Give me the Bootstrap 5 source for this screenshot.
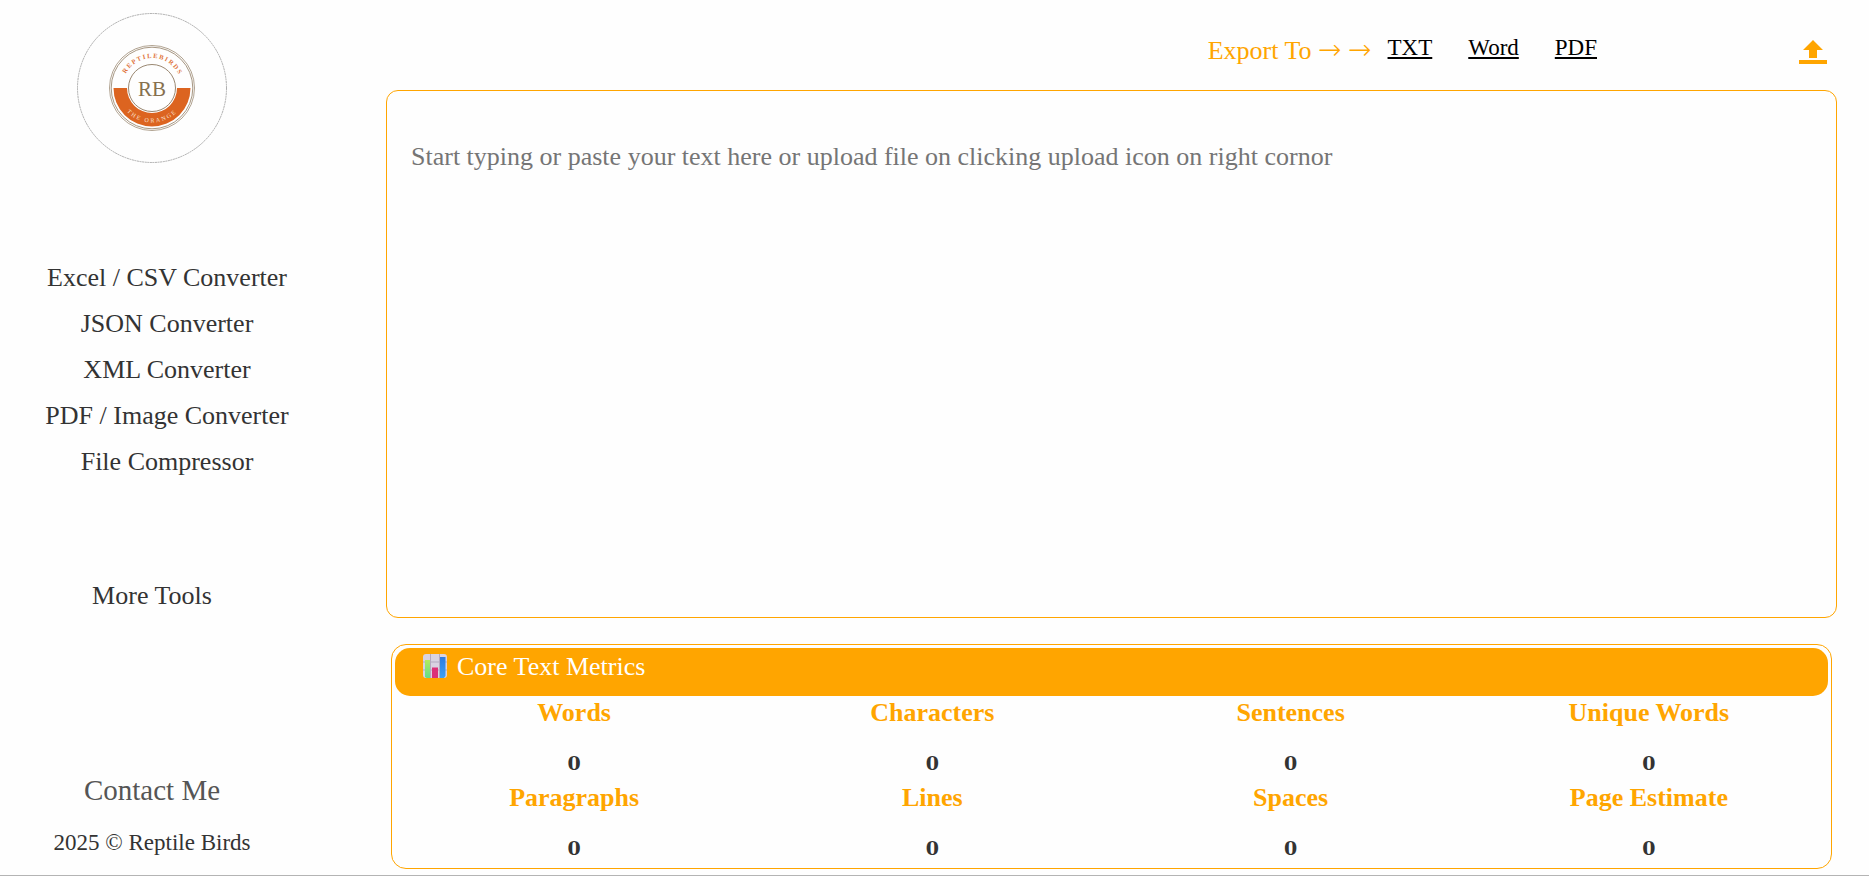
<!DOCTYPE html>
<html lang="en">
<head>
<meta charset="utf-8">
<meta name="viewport" content="width=device-width, initial-scale=1">
<title>Reptile Birds - Text Metrics</title>
<link rel="stylesheet" href="https://cdn.jsdelivr.net/npm/bootstrap@5.3.0/dist/css/bootstrap.min.css">
<style>
  :root { --brand: #ffa500; --ink: #333; }
  body { font-family: Georgia, "Liberation Serif", serif; font-size: 26px; line-height: 36px; color: var(--ink); background: #fefefe; }
  .app-shell { border-bottom: 1px solid #b4b4b4; }
  .side-panel { width: 304px; padding: 13px 0 14px; }
  .side-panel a { color: var(--ink); line-height: 46px; }
  .logo-ring { width: 150px; height: 150px; margin-bottom: 92px; }
  .tool-list { padding-left: 30px; margin-bottom: 88px; }
  .side-panel .contact-link { color: #555; font-size: 29px; line-height: 46px; margin-bottom: 12px; }
  .copyright { font-size: 23px; }
  .workspace { padding: 0 32px 6px 82px; min-width: 0; }
  .export-bar { height: 90px; padding: 28px 10px 0 0; }
  .export-label { color: var(--brand); line-height: 46px; margin-right: 16px; }
  .export-arrows { font-family: "DejaVu Sans", sans-serif; font-size: 28px; font-weight: 200; line-height: 1; }
  .export-link { font-size: 23px; line-height: 40px; color: #000; background: none; text-decoration: underline; text-decoration-thickness: 2px; text-underline-offset: 2px; }
  .upload-btn { margin: 12px 0 0 202px; background: none; line-height: 0; color: var(--brand); }
  .editor { border: 1px solid var(--brand); border-radius: 12px; padding: 48px 24px 10px; color: var(--ink); background: transparent; resize: none; outline: 0; min-height: 240px; }
  .editor::placeholder { color: #757575; opacity: 1; }
  .metrics { border: 1px solid var(--brand); border-radius: 15px; padding: 3px 3px 2px; margin: 26px 5px 0; }
  .metrics-title { background: var(--brand); color: #fff; border-radius: 15px; height: 48px; padding-left: 28px; gap: 10px; font-size: 26px; line-height: 38px; }
  .metrics-title svg { margin-top: 6px; }
  .metric-name { color: var(--brand); font-size: 26px; line-height: 34px; }
  .metric-value { font-family: "DejaVu Serif", serif; font-size: 19px; line-height: 36px; margin-top: 15px; }
</style>
</head>
<body>
<div class="app-shell d-flex min-vh-100">
  <aside class="side-panel d-flex flex-column align-items-center flex-shrink-0 text-center">
    <svg class="logo-ring" viewBox="0 0 150 150" role="img" aria-label="Reptile Birds">
      <circle cx="75" cy="75" r="74.5" fill="none" stroke="#999" stroke-width=".8" stroke-dasharray="2 .6"/>
      <g fill="none" stroke="#8f7b62">
        <circle cx="75" cy="75" r="42.5" stroke-width=".7"/>
        <circle cx="75" cy="75" r="40.8" stroke-width=".8"/>
        <circle cx="75" cy="75" r="23.5" stroke-width=".9"/>
      </g>
      <path d="M36.500 75a38.500 38.500 0 0 0 77 0H100a25 25 0 0 1-50 0z" fill="#dc6420"/>
      <path id="arcTop" d="M45 75a30 30 0 0 1 60 0" fill="none"/>
      <path id="arcLow" d="M40.500 75a34.500 34.500 0 0 0 69 0" fill="none"/>
      <text x="75" y="83" text-anchor="middle" font-size="21" fill="#86704f">RB</text>
      <text font-size="6.500" font-weight="bold" letter-spacing="1.500" fill="#e0733a" text-anchor="middle"><textPath href="#arcTop" startOffset="51%">REPTILEBIRDS</textPath></text>
      <text font-size="6" letter-spacing="1.800" fill="#fbe3d3" text-anchor="middle"><textPath href="#arcLow" startOffset="50%">THE ORANGE</textPath></text>
    </svg>
    <nav aria-label="Converters">
      <ul class="tool-list list-unstyled">
        <li><a class="d-block text-decoration-none" href="#excel">Excel / CSV Converter</a></li>
        <li><a class="d-block text-decoration-none" href="#json">JSON Converter</a></li>
        <li><a class="d-block text-decoration-none" href="#xml">XML Converter</a></li>
        <li><a class="d-block text-decoration-none" href="#pdf">PDF / Image Converter</a></li>
        <li><a class="d-block text-decoration-none" href="#compress">File Compressor</a></li>
      </ul>
    </nav>
    <a class="text-decoration-none" href="#more">More Tools</a>
    <a class="contact-link text-decoration-none mt-auto" href="#contact">Contact Me</a>
    <div class="copyright">2025 © Reptile Birds</div>
  </aside>

  <main class="workspace d-flex flex-column flex-grow-1">
    <div class="export-bar d-flex justify-content-end align-items-start">
      <span class="export-label">Export To <span class="export-arrows">→</span> <span class="export-arrows">→</span></span>
      <div class="d-flex" style="gap: 36px">
        <button class="export-link border-0 p-0" type="button">TXT</button>
        <button class="export-link border-0 p-0" type="button">Word</button>
        <button class="export-link border-0 p-0" type="button">PDF</button>
      </div>
      <button class="upload-btn border-0 p-0" type="button" aria-label="Upload file">
        <svg width="28" height="24" viewBox="0 0 28 24" fill="currentColor" aria-hidden="true"><path d="M14 0l10 10h-6v8h-8v-8H4zM0 20h28v4H0z"/></svg>
      </button>
    </div>
    <textarea class="editor d-block w-100 flex-grow-1" aria-label="Text" placeholder="Start typing or paste your text here or upload file on clicking upload icon on right cornor"></textarea>

    <section class="metrics">
      <h2 class="metrics-title d-flex align-items-start fw-normal m-0">
        <svg width="24" height="24" viewBox="0 0 24 24" class="flex-shrink-0" aria-hidden="true">
          <defs>
            <linearGradient id="gGreen" x2="0" y2="1"><stop stop-color="#b4ec5c"/><stop offset="1" stop-color="#5fdc8e"/></linearGradient>
            <linearGradient id="gBlue" x2="0" y2="1"><stop stop-color="#2e7be0"/><stop offset="1" stop-color="#3da0f2"/></linearGradient>
          </defs>
          <rect y="0" width="24" height="24" rx="3" fill="#d9d3e2"/>
          <path d="M7.500 0v24M16.500 0v24M0 8h24M0 16h24" stroke="#b3a9c0" stroke-width="1"/>
          <path d="M2 6h5v18H3.500L2 23z" fill="url(#gGreen)"/>
          <path d="M9 13.500h6V24H9z" fill="#dc3078"/>
          <path d="M17 3h5.500v19L21 24h-4z" fill="url(#gBlue)"/>
        </svg>
        <span>Core Text Metrics</span>
      </h2>
      <div class="row row-cols-4 g-0 text-center fw-bold">
        <div class="col"><div class="metric-name">Words</div><div class="metric-value">0</div></div>
        <div class="col"><div class="metric-name">Characters</div><div class="metric-value">0</div></div>
        <div class="col"><div class="metric-name">Sentences</div><div class="metric-value">0</div></div>
        <div class="col"><div class="metric-name">Unique Words</div><div class="metric-value">0</div></div>
        <div class="col"><div class="metric-name">Paragraphs</div><div class="metric-value">0</div></div>
        <div class="col"><div class="metric-name">Lines</div><div class="metric-value">0</div></div>
        <div class="col"><div class="metric-name">Spaces</div><div class="metric-value">0</div></div>
        <div class="col"><div class="metric-name">Page Estimate</div><div class="metric-value">0</div></div>
      </div>
    </section>
  </main>
</div>
<script src="https://cdn.jsdelivr.net/npm/bootstrap@5.3.0/dist/js/bootstrap.bundle.min.js"></script>
</body>
</html>
